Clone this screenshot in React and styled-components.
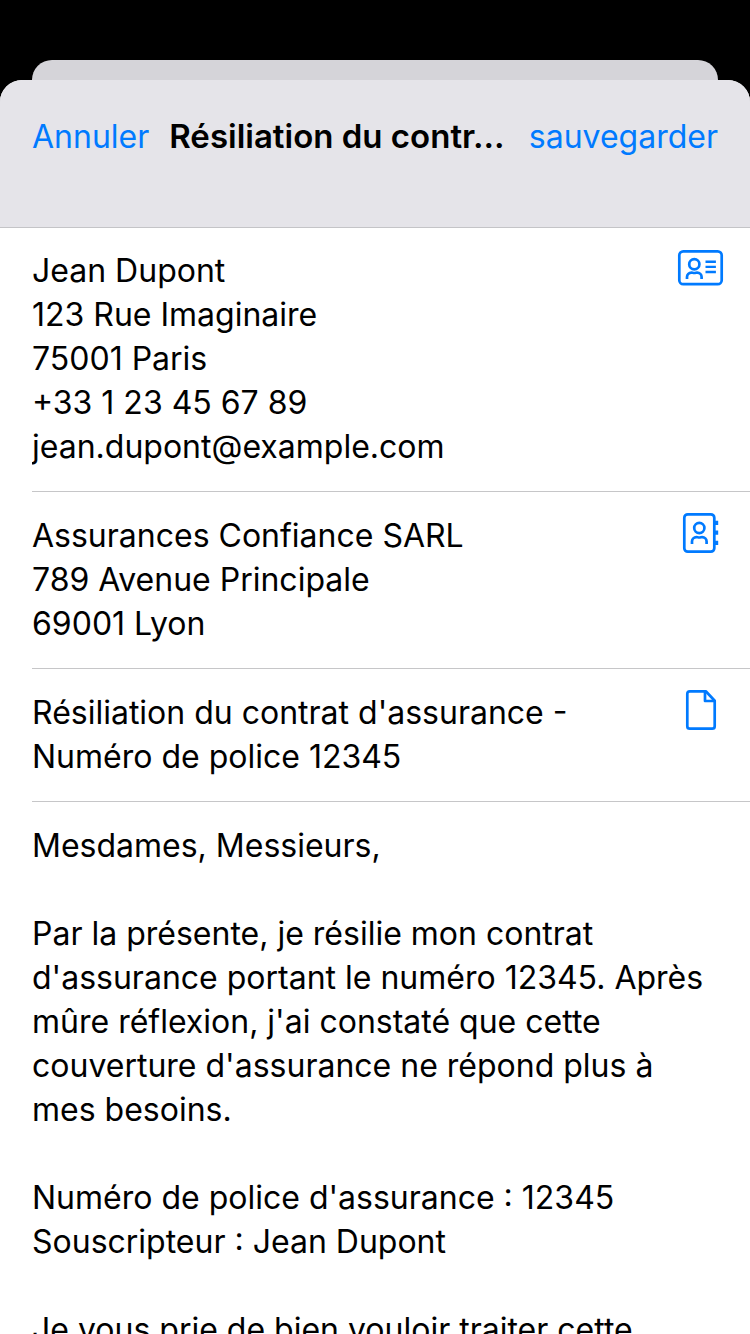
import React from "react";
import styled, { createGlobalStyle } from "styled-components";

const BLUE = "#007aff";

const GlobalStyle = createGlobalStyle`
  *, *::before, *::after { box-sizing: border-box; }
  body {
    margin: 0;
    background: #000;
    color: #000;
    font-family: Inter, "Liberation Sans", sans-serif;
    font-size: 32px;
    line-height: 44px;
  }
`;

const Screen = styled.div`
  display: flex;
  flex-direction: column;
  height: 100vh;
  overflow: hidden;
  padding-top: 60px;
`;

const SheetBehind = styled.div`
  flex: none;
  height: 20px;
  margin: 0 32px;
  background: #d5d4d9;
  border-radius: 20px 20px 0 0;
`;

const Sheet = styled.main`
  flex: 1;
  min-height: 0;
  display: flex;
  flex-direction: column;
  overflow: hidden;
  background: #fff;
  border-radius: 22px 22px 0 0;
`;

const NavBar = styled.header`
  flex: none;
  display: flex;
  align-items: baseline;
  gap: 20px;
  height: 147px;
  padding: 34px 32px 0;
  background: #e5e4e9;
  box-shadow: 0 1px 0 #c4c4c7;
`;

const NavButton = styled.button`
  flex: none;
  padding: 0;
  border: 0;
  background: none;
  color: ${BLUE};
  font: inherit;
`;

const Title = styled.h1`
  flex: 1;
  min-width: 0;
  margin: 0;
  overflow: hidden;
  font-size: 33px;
  font-weight: 600;
  text-overflow: ellipsis;
  white-space: nowrap;
`;

const Row = styled.section`
  flex: none;
  display: flex;
  align-items: flex-start;
  gap: 12px;
  margin-left: 32px;
  padding: 19px 25px 21px 0;
  border-bottom: 1px solid #c6c6c8;
`;

const MessageRow = styled(Row)`
  flex: 1;
  min-height: 0;
  padding-bottom: 0;
  border-bottom: 0;
`;

const TextBox = styled.textarea`
  flex: 1;
  min-width: 0;
  display: block;
  margin: 0;
  padding: 3px 0 1px;
  border: 0;
  outline: 0;
  resize: none;
  overflow: hidden;
  background: transparent;
  color: inherit;
  font: inherit;
  field-sizing: content;
`;

const IconButton = styled.button`
  flex: none;
  width: 48px;
  height: 44px;
  padding: 0;
  border: 0;
  background: none;
  color: ${BLUE};
`;

const Glyph = styled.svg`
  display: block;
  width: 48px;
  height: 44px;
  fill: none;
  stroke: currentColor;
  stroke-width: 2.7;
  stroke-linejoin: round;
`;

const ContactCardIcon = () => (
  <Glyph viewBox="0 0 48 44" aria-hidden="true">
    <rect x="2.3" y="5.3" width="42.4" height="32.9" rx="4" />
    <circle cx="17.3" cy="18.2" r="5.1" />
    <path d="M10 33v-2a4.4 4.4 0 0 1 4.4-4.4c1 0 1.6.4 2.9.4s1.9-.4 2.9-.4a4.4 4.4 0 0 1 4.4 4.4v2" />
    <path d="M28.5 15.8h10.4M28.5 20.9h10.4M28.5 26h10.4" strokeWidth="2.4" />
  </Glyph>
);

const AddressBookIcon = () => (
  <Glyph viewBox="0 0 48 44" aria-hidden="true">
    <rect x="7.3" y="3.3" width="30" height="37.4" rx="3.5" />
    <path d="M39.5 9.7V14M39.5 19.4v4.3M39.5 29.7V34" strokeWidth="3.4" />
    <circle cx="22.3" cy="17" r="5.1" />
    <path d="M15 33v-2.5a4.4 4.4 0 0 1 4.4-4.4c1 0 1.6.4 2.9.4s1.9-.4 2.9-.4a4.4 4.4 0 0 1 4.4 4.4V33" />
  </Glyph>
);

const DocumentIcon = () => (
  <Glyph viewBox="0 0 48 44" aria-hidden="true">
    <path d="M12.8 3.3h16l8.9 9.4v25.500a2.500 2.500 0 0 1-2.500 2.500H12.800a2.500 2.500 0 0 1-2.500-2.500V5.800a2.500 2.500 0 0 1 2.500-2.500z" />
    <path d="M28 3.5V13h9.7" />
  </Glyph>
);

const FIELDS = [
  {
    label: "Expéditeur",
    action: "Choisir l'expéditeur",
    rows: 5,
    Icon: ContactCardIcon,
    value:
      "Jean Dupont\n123 Rue Imaginaire\n75001 Paris\n+33 1 23 45 67 89\njean.dupont@example.com",
  },
  {
    label: "Destinataire",
    action: "Choisir le destinataire",
    rows: 3,
    Icon: AddressBookIcon,
    value: "Assurances Confiance SARL\n789 Avenue Principale\n69001 Lyon",
  },
  {
    label: "Objet",
    action: "Choisir un modèle",
    rows: 2,
    Icon: DocumentIcon,
    value: "Résiliation du contrat d'assurance - Numéro de police 12345",
  },
];

const MESSAGE = [
  "Mesdames, Messieurs,",
  "Par la présente, je résilie mon contrat d'assurance portant le numéro 12345. Après mûre réflexion, j'ai constaté que cette couverture d'assurance ne répond plus à mes besoins.",
  "Numéro de police d'assurance : 12345\nSouscripteur : Jean Dupont",
  "Je vous prie de bien vouloir traiter cette",
].join("\n\n");

export default function App() {
  return (
    <>
      <GlobalStyle />
      <Screen>
        <SheetBehind />
        <Sheet>
          <NavBar>
            <NavButton type="button">Annuler</NavButton>
            <Title>Résiliation du contr...</Title>
            <NavButton type="button">sauvegarder</NavButton>
          </NavBar>
          {FIELDS.map(({ label, action, rows, Icon, value }) => (
            <Row key={label}>
              <TextBox aria-label={label} rows={rows} defaultValue={value} spellCheck={false} />
              <IconButton type="button" aria-label={action}>
                <Icon />
              </IconButton>
            </Row>
          ))}
          <MessageRow>
            <TextBox aria-label="Message" defaultValue={MESSAGE} spellCheck={false} />
          </MessageRow>
        </Sheet>
      </Screen>
    </>
  );
}
